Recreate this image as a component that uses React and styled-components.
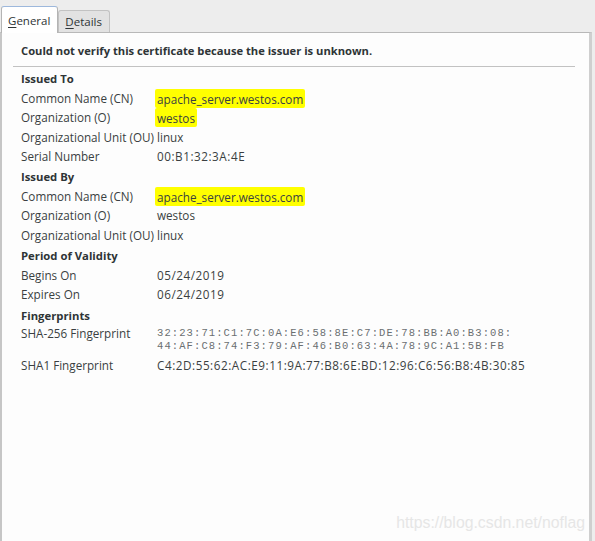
import styled, { createGlobalStyle } from "styled-components";

const GlobalStyle = createGlobalStyle`
  html, body {
    margin: 0;
    padding: 0;
    background: #ededed;
  }
  body {
    font-family: "Open Sans", "DejaVu Sans", sans-serif;
    color: #2e3436;
  }
`;

const Window = styled.div`
  position: relative;
  width: 595px;
  height: 541px;
  display: flex;
  flex-direction: column;
  overflow: hidden;
`;

const TabBar = styled.div`
  display: flex;
  align-items: flex-end;
  height: 32px;
  padding-left: 1px;
  box-sizing: border-box;
`;

const Tab = styled.div`
  box-sizing: border-box;
  height: ${p => (p.$active ? "27px" : "22px")};
  padding: 0 7px 0 6px;
  display: flex;
  align-items: center;
  font-size: 11.5px;
  color: #2e3436;
  background: ${p => (p.$active ? "#ffffff" : "#e2e2e2")};
  border: 1px solid ${p => (p.$active ? "#b4b4b4" : "#c2c2c2")};
  border-top-color: ${p => (p.$active ? "#9db8dc" : "#c2c2c2")};
  border-bottom: none;
  border-radius: 3px 3px 0 0;
  margin-bottom: ${p => (p.$active ? "-1px" : "0")};
  position: relative;
  z-index: ${p => (p.$active ? 1 : 0)};

  u {
    text-decoration: underline;
    text-underline-offset: 2px;
  }
`;

const Panel = styled.div`
  flex: 1;
  background: #fdfdfd;
  border-top: 1px solid #b8b8b8;
  border-left: 2px solid #c6c6c6;
  border-right: 3px solid #cfcfcf;
  margin-right: 3px;
  padding: 10px 14px 0 11px;
`;

const Warning = styled.div`
  font-weight: 700;
  font-size: 11.2px;
  line-height: 16px;
  padding: 0 0 7px 8px;
  border-bottom: 1px solid #c2c2c2;
`;

const Fields = styled.div`
  padding: 2px 0 0 8px;
`;

const Heading = styled.div`
  font-weight: 700;
  font-size: 11.3px;
  line-height: 20px;
  margin-top: ${p => (p.$first ? "0" : "1px")};
`;

const Row = styled.div`
  display: grid;
  grid-template-columns: 136px 1fr;
  align-items: start;
  font-size: 11.7px;
  line-height: 19.3px;
  min-height: ${p => (p.$tall ? "31.5px" : "19.3px")};
  margin-top: ${p => (p.$tall ? "-1.5px" : "0")};
  white-space: nowrap;
`;

const Label = styled.span`
  color: #3a3f41;
`;

const Value = styled.span`
  color: #3a3f41;
  letter-spacing: ${p => (p.$numeric ? "0.55px" : "normal")};
`;

const Marked = styled.span`
  background: #ffff00;
  padding: 1.5px 2px;
  margin-left: -2px;
  border-radius: 2px;
  color: #3a3f41;
`;

const Mono = styled.div`
  font-family: "Liberation Mono", "DejaVu Sans Mono", monospace;
  font-size: 10.5px;
  letter-spacing: 1.1px;
  line-height: 13px;
  color: #6b6f71;
  padding-top: 3px;
`;

const Watermark = styled.div`
  position: absolute;
  right: 10px;
  bottom: 9px;
  font-family: "Liberation Sans", Arial, sans-serif;
  font-size: 15.8px;
  color: #e6e6e6;
  pointer-events: none;
`;

const groups = [
  {
    title: "Issued To",
    rows: [
      ["Common Name (CN)", "apache_server.westos.com", true],
      ["Organization (O)", "westos", true],
      ["Organizational Unit (OU)", "linux"],
      ["Serial Number", "00:B1:32:3A:4E", false, true]
    ]
  },
  {
    title: "Issued By",
    rows: [
      ["Common Name (CN)", "apache_server.westos.com", true],
      ["Organization (O)", "westos"],
      ["Organizational Unit (OU)", "linux"]
    ]
  },
  {
    title: "Period of Validity",
    rows: [
      ["Begins On", "05/24/2019", false, true],
      ["Expires On", "06/24/2019", false, true]
    ]
  }
];

const App = () => (
  <Window>
    <GlobalStyle />
    <TabBar>
      <Tab $active>
        <span>
          <u>G</u>eneral
        </span>
      </Tab>
      <Tab>
        <span>
          <u>D</u>etails
        </span>
      </Tab>
    </TabBar>
    <Panel>
      <Warning>Could not verify this certificate because the issuer is unknown.</Warning>
      <Fields>
        {groups.map((g, i) => (
          <div key={g.title}>
            <Heading $first={i === 0}>{g.title}</Heading>
            {g.rows.map(([label, value, marked, numeric]) => (
              <Row key={label}>
                <Label>{label}</Label>
                {marked ? (
                  <Value>
                    <Marked>{value}</Marked>
                  </Value>
                ) : (
                  <Value $numeric={numeric}>{value}</Value>
                )}
              </Row>
            ))}
          </div>
        ))}
        <Heading>Fingerprints</Heading>
        <Row $tall>
          <Label>SHA-256 Fingerprint</Label>
          <Mono>
            32:23:71:C1:7C:0A:E6:58:8E:C7:DE:78:BB:A0:B3:08:
            <br />
            44:AF:C8:74:F3:79:AF:46:B0:63:4A:78:9C:A1:5B:FB
          </Mono>
        </Row>
        <Row>
          <Label>SHA1 Fingerprint</Label>
          <Value $numeric>C4:2D:55:62:AC:E9:11:9A:77:B8:6E:BD:12:96:C6:56:B8:4B:30:85</Value>
        </Row>
      </Fields>
    </Panel>
    <Watermark>https://blog.csdn.net/noflag</Watermark>
  </Window>
);

export default App;
